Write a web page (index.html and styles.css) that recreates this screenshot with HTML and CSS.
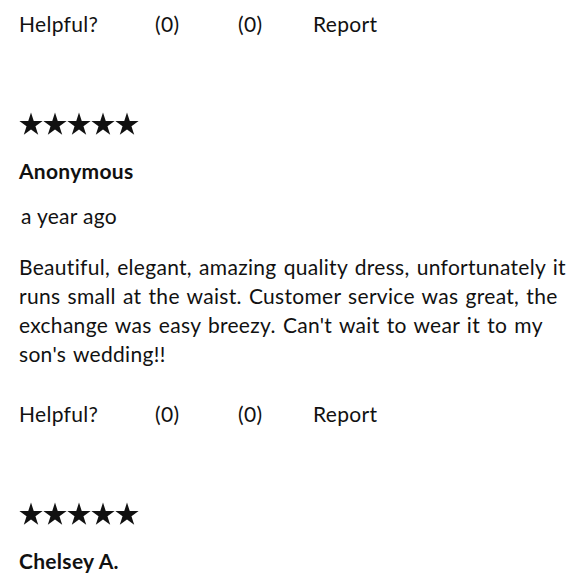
FILE: index.html
```html
<!DOCTYPE html>
<html>
<head>
<meta charset="utf-8">
<link rel="stylesheet" href="styles.css">
</head>
<body>
<div class="reviews">
  <div class="actions">
    <span class="helpful">Helpful?</span>
    <span class="vote up">(0)</span>
    <span class="vote down">(0)</span>
    <span class="report">Report</span>
  </div>

  <div class="review">
    <div class="stars">
      <svg viewBox="0 0 120 24" width="120" height="24">
        <defs>
          <path id="star" d="M12 0.6l2.75 8.45h8.9l-7.2 5.23 2.75 8.46L12 17.5l-7.2 5.24 2.75-8.46L0.35 9.05h8.9z"/>
        </defs>
        <use href="#star" x="0"/>
        <use href="#star" x="24"/>
        <use href="#star" x="48"/>
        <use href="#star" x="72"/>
        <use href="#star" x="96"/>
      </svg>
    </div>
    <div class="name">Anonymous</div>
    <div class="date">a year ago</div>
    <p class="body">Beautiful, elegant, amazing quality dress, unfortunately it runs small at the waist. Customer service was great, the exchange was easy breezy. Can't wait to wear it to my son's wedding!!</p>
    <div class="actions">
      <span class="helpful">Helpful?</span>
      <span class="vote up">(0)</span>
      <span class="vote down">(0)</span>
      <span class="report">Report</span>
    </div>
  </div>

  <div class="review">
    <div class="stars">
      <svg viewBox="0 0 120 24" width="120" height="24">
        <use href="#star" x="0"/>
        <use href="#star" x="24"/>
        <use href="#star" x="48"/>
        <use href="#star" x="72"/>
        <use href="#star" x="96"/>
      </svg>
    </div>
    <div class="name">Chelsey A.</div>
  </div>
</div>
</body>
</html>
```
FILE: styles.css
```css
html, body {
  margin: 0;
  padding: 0;
  background: #ffffff;
}

body {
  font-family: "Lato", "DejaVu Sans", sans-serif;
  color: #111111;
  font-size: 21px;
  line-height: 29px;
  letter-spacing: 0.3px;
}

.reviews {
  padding: 9px 0 0 19px;
}

.actions {
  display: flex;
  height: 29px;
}

.helpful {
  width: 136px;
}

.vote.up {
  width: 83px;
}

.vote.down {
  width: 75px;
}

.review {
  padding-top: 74px;
}

.stars {
  height: 24px;
  display: flex;
}

.stars svg {
  fill: #111111;
  display: block;
}

.name {
  font-weight: 700;
  margin-top: 20px;
}

.date {
  margin-top: 16px;
  padding-left: 2px;
}

.body {
  margin: 22px 0 31px 0;
  word-spacing: 1.5px;
}
```
